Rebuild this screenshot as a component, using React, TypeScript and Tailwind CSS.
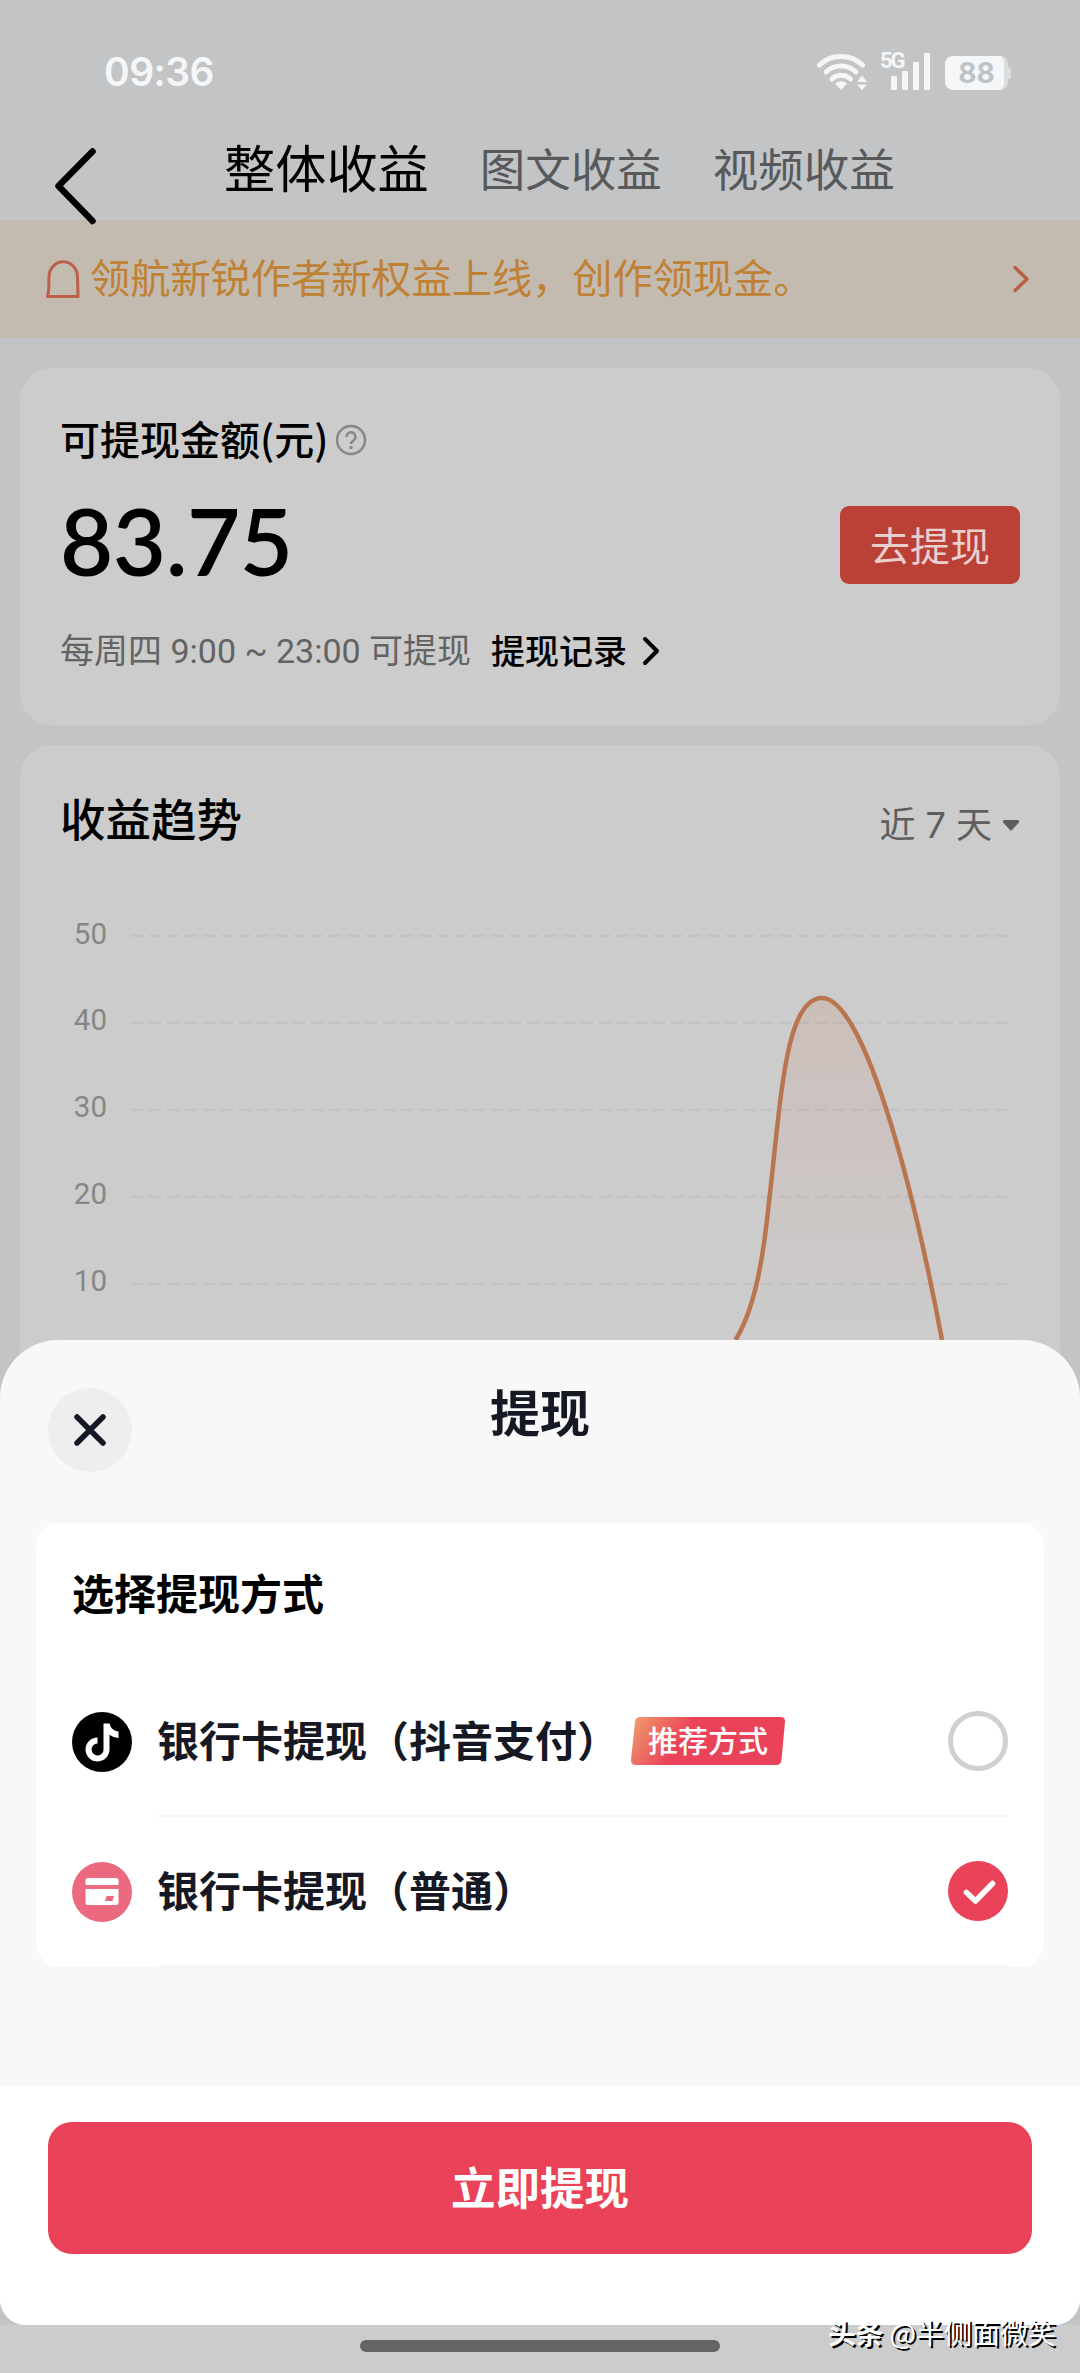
const tabs = ["图文收益", "视频收益"];

const axis = [50, 40, 30, 20, 10];

const curve =
  "M735.5 620 C755 588 763 540 769 482 C781 380 785 278 822 278 C862 278 910 450 942 620";

function StatusBar() {
  return (
    <div className="flex h-[142px] items-start pt-[48px] pr-[69px] pl-[104px] text-[#f5f6f7]">
      <span className="font-['Inter'] text-[39px] leading-[48px] font-semibold tracking-[-0.6px]">
        09:36
      </span>
      <svg className="mt-[4px] ml-auto h-[40px] w-[54px]" viewBox="0 0 54 40" fill="none">
        <g stroke="currentColor" strokeWidth="5" strokeLinecap="round">
          <path d="M3.5 13 C15 1.5 35 1.5 46.500 13" />
          <path d="M10 20 C18 12 32 12 40 20" />
          <path d="M16 27 C21 22 29 22 34.500 27" />
        </g>
        <path d="M25 38 L19 31.500 Q25 26.500 31 31.500 Z" fill="currentColor" />
        <path d="M46 23.500 L51 30 H41 Z M46 38 L51 32.500 H41 Z" fill="currentColor" />
      </svg>
      <div className="relative mt-[3px] ml-[10px] flex h-[39px] w-[50px] items-end gap-[5px] pl-[11px]">
        <span className="absolute top-0 left-0 font-['Roboto'] text-[22px] leading-[20px] font-bold tracking-[-2px]">
          5G
        </span>
        <i className="h-[14px] w-[6px] rounded-[1px] bg-current" />
        <i className="h-[19px] w-[6px] rounded-[1px] bg-current" />
        <i className="h-[28px] w-[6px] rounded-[1px] bg-current" />
        <i className="h-[37px] w-[6px] rounded-[1px] bg-current" />
      </div>
      <div className="mt-[8px] ml-[15px] flex h-[34px] items-center">
        <span className="flex h-[34px] w-[63px] items-center justify-center rounded-[8px] border-r-[4px] border-[#dcdddf] bg-[#f5f6f7] pl-[4px] font-['Inter'] text-[28px] leading-none font-bold text-[#bcc2c7]">
          88
        </span>
        <i className="h-[12px] w-[3px] rounded-r-[3px] bg-[#dcdddf]" />
      </div>
    </div>
  );
}

function TabBar() {
  return (
    <div className="flex h-[78px] items-start pl-[54px]">
      <svg className="mt-[4px] -mb-[8px] h-[80px] w-[44px] shrink-0" viewBox="0 0 44 80" fill="none">
        <path
          d="M38.500 5.500 L4.500 40 L38.500 75"
          stroke="#000"
          strokeWidth="6.500"
          strokeLinecap="round"
          strokeLinejoin="round"
        />
      </svg>
      <div className="-mt-[2px] ml-[126px] flex">
        <span className="text-[51.2px] leading-[52px]">整体收益</span>
        {tabs.map((tab) => (
          <span key={tab} className="ml-[51px] text-[45.500px] leading-[54px] text-[#58595b]">
            {tab}
          </span>
        ))}
      </div>
    </div>
  );
}

function Notice() {
  return (
    <div className="flex h-[118px] items-center bg-[#c4bbb0] pr-[50px] pl-[45px] text-[#bf8134]">
      <svg className="h-[40px] w-[36px]" viewBox="0 0 36 40" fill="none">
        <path
          d="M2.500 37.500 Q4 33 4 18 A14 15 0 0 1 32.500 18 L33 37.500 Z"
          stroke="#bd604a"
          strokeWidth="3"
          strokeLinejoin="round"
        />
      </svg>
      <span className="mb-[6px] ml-[9px] text-[40.200px] leading-[56px]">领航新锐作者新权益上线，创作领现金。</span>
      <svg className="ml-auto h-[28px] w-[18px]" viewBox="0 0 18 28" fill="none">
        <path d="M3 2.500 L15 14 L3 25.500" stroke="#b66045" strokeWidth="3.500" strokeLinecap="round" strokeLinejoin="round" />
      </svg>
    </div>
  );
}

function BalanceCard() {
  return (
    <section className="mx-[20px] mt-[30px] h-[357px] rounded-[32px] bg-[#ccc] px-[40px] pt-[42px]">
      <div className="flex h-[60px] items-center">
        <h2 className="mb-[5px] text-[40px] leading-[60px] font-medium">可提现金额(元)</h2>
        <svg className="ml-[7px] h-[32px] w-[32px]" viewBox="0 0 32 32" fill="none" stroke="#878787">
          <circle cx="16" cy="16" r="14" strokeWidth="2.500" />
          <path d="M11.500 13 A4.500 4.500 0 1 1 18.500 16.500 Q16 18 16 20" strokeWidth="2.500" />
          <circle cx="16" cy="23.500" r="1" strokeWidth="1.500" />
        </svg>
      </div>
      <div className="mt-[20px] flex h-[110px] items-center justify-between">
        <strong className="mb-[8px] font-['Lato'] text-[92px] leading-[110px] font-semibold tracking-[-0.5px]">83.75</strong>
        <button className="h-[78px] w-[180px] rounded-[9px] bg-[#bb4035] pb-[3px] text-[40px] text-[#e9cfcd]">
          去提现
        </button>
      </div>
      <div className="mt-[25px] flex h-[52px] items-center text-[34px] leading-[52px]">
        <span className="font-['Roboto','Noto_Sans_CJK_SC',sans-serif] text-[#636363]">每周四 9:00 ~ 23:00 可提现</span>
        <span className="mb-[2px] ml-[20px] font-medium">提现记录</span>
        <svg className="ml-[15px] h-[30px] w-[18px]" viewBox="0 0 18 30" fill="none">
          <path d="M3 3 L15 15 L3 27" stroke="#000" strokeWidth="4" strokeLinecap="round" strokeLinejoin="round" />
        </svg>
      </div>
    </section>
  );
}

function TrendCard() {
  return (
    <section className="mx-[20px] mt-[20px] h-[1580px] rounded-t-[32px] bg-[#ccc]">
      <div className="flex h-[140px] items-center justify-between px-[40px]">
        <h2 className="mt-[3px] text-[45.500px] leading-[60px] font-medium">收益趋势</h2>
        <div className="mt-[20px] flex items-center text-[#5e5e5e]">
          <span className="font-['Inter','Noto_Sans_CJK_SC',sans-serif] text-[36px] leading-[52px]">近 7 天</span>
          <svg className="ml-[10px] h-[12px] w-[18px]" viewBox="0 0 18 12">
            <path d="M2 1 H16 Q18 2 16.500 4 L10 11 Q9 12 8 11 L1.500 4 Q0 2 2 1 Z" fill="#5e5e5e" />
          </svg>
        </div>
      </div>
      <svg className="-mx-[20px] -mt-[165px] h-[620px] w-[1080px]" viewBox="0 0 1080 620">
        <defs>
          <linearGradient id="area" x1="0" y1="0" x2="0" y2="1">
            <stop offset="0" stopColor="#c97a50" stopOpacity="0.16" />
            <stop offset="0.3" stopColor="#c96a50" stopOpacity="0.1" />
            <stop offset="1" stopColor="#c96a50" stopOpacity="0" />
          </linearGradient>
        </defs>
        {axis.map((value, i) => (
          <g key={value}>
            <text x="107" y={223.5 + i * 86.8} textAnchor="end" fill="#868686" className="font-['Roboto'] text-[29.500px]">
              {value}
            </text>
            <line x1="131" x2="1008" y1={215.7 + i * 87} y2={215.7 + i * 87} stroke="#c2c3c3" strokeWidth="2.500" strokeDasharray="12 6" />
          </g>
        ))}
        <path d={curve} fill="url(#area)" />
        <path d={curve} fill="none" stroke="#b97550" strokeWidth="4.500" />
      </svg>
    </section>
  );
}

function DouyinIcon() {
  return (
    <svg className="h-[60px] w-[60px]" viewBox="0 0 60 60">
      <circle cx="30" cy="30" r="30" fill="#000" />
      <path d="M34.500 12 V37 A9 9 0 1 1 25.500 28.500" fill="none" stroke="#fff" strokeWidth="6" />
      <path d="M31.500 11.500 H37.500 Q39 18.500 46.500 19.500 V26 Q41 25.500 36 22 Z" fill="#fff" />
    </svg>
  );
}

function BankCardIcon() {
  return (
    <svg className="h-[60px] w-[60px]" viewBox="0 0 60 60">
      <circle cx="30" cy="30" r="30" fill="#ec6a80" />
      <path d="M16 16 H44 Q46.500 16 46.500 18.500 V23 H13.500 V18.500 Q13.500 16 16 16 Z" fill="#fff" />
      <path
        d="M13.500 27 H46.500 V40.500 Q46.500 43 44 43 H16 Q13.500 43 13.500 40.500 Z M34.500 34 L33 39 H40.500 L42 34 Z"
        fill="#fff"
        fillRule="evenodd"
      />
    </svg>
  );
}

function MethodBadge() {
  return (
    <span className="relative ml-[12px] flex h-[48px] w-[154px] items-center justify-center">
      <svg className="absolute inset-0 h-full w-full" viewBox="0 0 154 48">
        <defs>
          <linearGradient id="badge" x1="0" y1="0.300" x2="1" y2="0.500">
            <stop offset="0" stopColor="#f0936a" />
            <stop offset="0.350" stopColor="#ea4359" />
          </linearGradient>
        </defs>
        <path
          d="M9.500 0 H149 Q154.500 0 154 5 L150.500 43 Q150 48 145 48 H5 Q-0.500 48 0 43 L4 5 Q4.500 0 9.500 0 Z"
          fill="url(#badge)"
        />
      </svg>
      <span className="relative mb-[4px] text-[30px] leading-[44px] font-medium text-white">推荐方式</span>
    </span>
  );
}

function WithdrawSheet() {
  return (
    <div className="absolute inset-x-0 bottom-[48px] h-[985px] overflow-hidden rounded-t-[58px] rounded-b-[26px] bg-[#f8f8f8] text-[#161823]">
      <header className="grid h-[183px] grid-cols-[84px_1fr_84px] items-start px-[48px] pt-[36px]">
        <button className="mt-[12px] flex h-[84px] w-[84px] items-center justify-center rounded-full bg-[#eeeeef]">
          <svg className="h-[34px] w-[34px]" viewBox="0 0 34 34">
            <path d="M4 4 L30 30 M30 4 L4 30" stroke="#161823" strokeWidth="5.500" strokeLinecap="round" />
          </svg>
        </button>
        <h1 className="-mt-[3px] text-center text-[50px] leading-[74px] font-bold">提现</h1>
      </header>
      <section className="mx-[36px] h-[444px] overflow-hidden rounded-[24px] bg-white px-[36px]">
        <h2 className="h-[144px] pt-[38px] text-[42px] leading-[62px] font-bold text-black">选择提现方式</h2>
        <div className="flex h-[150px] items-center">
          <DouyinIcon />
          <div className="ml-[25px] flex h-full flex-1 items-center border-b-2 border-[#f7f7f7]">
            <span className="mb-[5px] text-[42px] leading-[60px] font-bold">银行卡提现（抖音支付）</span>
            <MethodBadge />
            <i className="ml-auto h-[60px] w-[60px] rounded-full border-[5px] border-[#d0d0d0]" />
          </div>
        </div>
        <div className="flex h-[150px] items-center">
          <BankCardIcon />
          <div className="ml-[25px] flex h-full flex-1 items-center border-b-2 border-[#f8f8f8]">
            <span className="mb-[5px] text-[42px] leading-[60px] font-bold">银行卡提现（普通）</span>
            <svg className="ml-auto h-[60px] w-[60px]" viewBox="0 0 60 60">
              <circle cx="30" cy="30" r="30" fill="#ea4359" />
              <path d="M18.500 31.500 L27.500 40 L44.500 22.500" fill="none" stroke="#fff" strokeWidth="5.500" strokeLinecap="round" strokeLinejoin="round" />
            </svg>
          </div>
        </div>
      </section>
      <footer className="mt-[119px] h-[239px] bg-white px-[48px] pt-[36px]">
        <button className="h-[132px] w-full rounded-[24px] bg-[#ea4359] pb-[3px] text-[44.500px] font-bold text-white">
          立即提现
        </button>
      </footer>
    </div>
  );
}

export default function App() {
  return (
    <div className="relative h-[2373px] w-[1080px] overflow-hidden bg-[#c3c4c6] font-['Noto_Sans_CJK_SC',sans-serif] text-black">
      <StatusBar />
      <TabBar />
      <Notice />
      <BalanceCard />
      <TrendCard />
      <div className="absolute inset-x-0 bottom-0 flex h-[48px] justify-center bg-[#ccc] pt-[15px]">
        <i className="h-[12px] w-[360px] rounded-full bg-[#646464]" />
      </div>
      <WithdrawSheet />
      <div className="absolute right-[24px] bottom-[21px] text-[27.500px] leading-[40px] whitespace-nowrap text-white [text-shadow:2px_2px_0_#000]">
        <b>头条</b> <span className="text-[28px]">@半侧面微笑</span>
      </div>
    </div>
  );
}
